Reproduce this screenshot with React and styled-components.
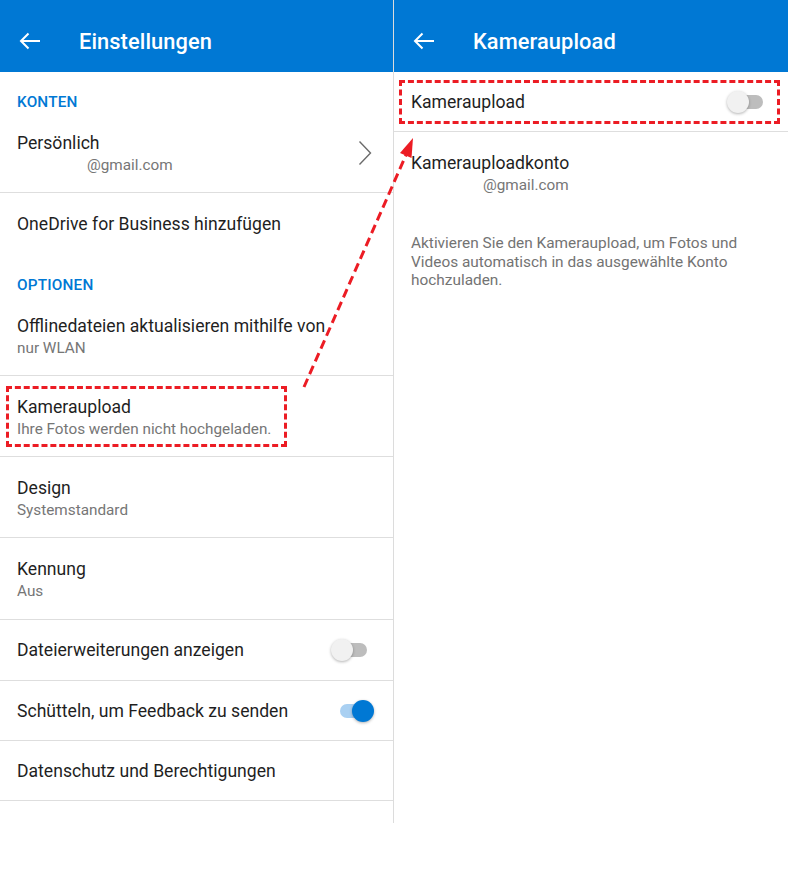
import React from "react";
import styled, { createGlobalStyle } from "styled-components";

const GlobalStyle = createGlobalStyle`
  html, body {
    margin: 0;
    padding: 0;
    background: #ffffff;
  }
  body {
    font-family: Roboto, "Noto Sans", "Liberation Sans", sans-serif;
  }
`;

const Page = styled.div`
  position: relative;
  width: 788px;
  height: 895px;
  background: #ffffff;
`;

const Columns = styled.div`
  display: flex;
  flex-direction: row;
  height: 823px;
`;

const Panel = styled.div`
  display: flex;
  flex-direction: column;
  width: ${(props) => (props.left ? "393px" : "auto")};
  flex: ${(props) => (props.left ? "none" : "1")};
  border-right: ${(props) => (props.left ? "1px solid #dcdcdc" : "none")};
`;

const Header = styled.div`
  display: flex;
  flex-direction: row;
  align-items: center;
  height: 72px;
  padding: 0 19px;
  background: #0078d4;
  color: #ffffff;
  box-sizing: border-box;
`;

const BackBtn = styled.div`
  display: flex;
  align-items: center;
  width: 60px;
  height: 24px;
  padding-top: 10px;
`;

const Title = styled.h1`
  margin: 0;
  padding-top: 11px;
  font-size: 21.8px;
  font-weight: 500;
  letter-spacing: 0.1px;
`;

const SectionLabel = styled.div`
  padding: 20px 17px 0;
  height: 20px;
  line-height: 20px;
  font-size: 15.3px;
  font-weight: 500;
  color: #0078d4;
  letter-spacing: 0.2px;
`;

const Row = styled.div`
  display: flex;
  flex-direction: row;
  justify-content: space-between;
  box-sizing: border-box;
  height: ${(props) => props.h || 81}px;
  padding: ${(props) => (props.twoLine ? "20px 17px 17px" : "0 17px")};
  align-items: ${(props) => (props.twoLine ? "flex-start" : "center")};
  border-bottom: ${(props) => (props.divider ? "1px solid #dedede" : "none")};
`;

const TextCol = styled.div`
  display: flex;
  flex-direction: column;
`;

const RowTitle = styled.div`
  font-size: 17.6px;
  line-height: 22px;
  color: #1f1f1f;
`;

const RowSub = styled.div`
  font-size: 15.3px;
  line-height: 22px;
  color: #767676;
  padding-left: ${(props) => props.indent || 0}px;
`;

const Chevron = styled.div`
  display: flex;
  align-items: center;
  align-self: center;
  margin-right: 4px;
  margin-top: -2px;
`;

const Track = styled.div`
  position: relative;
  width: 30px;
  height: 14px;
  border-radius: 7px;
  margin-right: ${(props) => props.mr || 0}px;
  background: ${(props) => (props.on ? "#a9d0f2" : "#bdbdbd")};
`;

const Thumb = styled.div`
  position: absolute;
  top: -4px;
  left: ${(props) => (props.on ? "12px" : "-6px")};
  width: 22px;
  height: 22px;
  border-radius: 50%;
  background: ${(props) => (props.on ? "#0078d4" : "#f1f1f1")};
  box-shadow: 0 1px 3px rgba(0, 0, 0, 0.3);
`;

const Description = styled.p`
  margin: 0;
  padding: 21px 17px;
  font-size: 15.4px;
  line-height: 18.5px;
  color: #737373;
`;

const Highlight = styled.div`
  position: absolute;
  left: ${(props) => props.x}px;
  top: ${(props) => props.y}px;
  width: ${(props) => props.w}px;
  height: ${(props) => props.h}px;
  border: 3px dashed #ec1c24;
  box-sizing: border-box;
  pointer-events: none;
`;

const Overlay = styled.svg`
  position: absolute;
  left: 0;
  top: 0;
  pointer-events: none;
`;

const BackArrow = () => (
  <svg width="22" height="18" viewBox="0 0 22 18">
    <path
      d="M21 9H2M9.5 1.5L2 9l7.5 7.5"
      fill="none"
      stroke="#fff"
      strokeWidth="2"
    />
  </svg>
);

const Toggle = ({ on, mr }) => (
  <Track on={on ? 1 : 0} mr={mr}>
    <Thumb on={on ? 1 : 0} />
  </Track>
);

const TopBar = ({ title }) => (
  <Header>
    <BackBtn>
      <BackArrow />
    </BackBtn>
    <Title>{title}</Title>
  </Header>
);

const App = () => {
  return (
    <Page>
      <GlobalStyle />
      <Columns>
        <Panel left>
          <TopBar title="Einstellungen" />
          <SectionLabel>KONTEN</SectionLabel>
          <Row twoLine divider>
            <TextCol>
              <RowTitle>Persönlich</RowTitle>
              <RowSub indent={70}>@gmail.com</RowSub>
            </TextCol>
            <Chevron>
              <svg width="14" height="26" viewBox="0 0 14 26">
                <path
                  d="M1.5 1.5L12.5 13L1.5 24.5"
                  fill="none"
                  stroke="#6b6b6b"
                  strokeWidth="1.4"
                />
              </svg>
            </Chevron>
          </Row>
          <Row h={62}>
            <RowTitle>OneDrive for Business hinzufügen</RowTitle>
          </Row>
          <SectionLabel>OPTIONEN</SectionLabel>
          <Row twoLine divider>
            <TextCol>
              <RowTitle>Offlinedateien aktualisieren mithilfe von</RowTitle>
              <RowSub>nur WLAN</RowSub>
            </TextCol>
          </Row>
          <Row twoLine divider>
            <TextCol>
              <RowTitle>Kameraupload</RowTitle>
              <RowSub>Ihre Fotos werden nicht hochgeladen.</RowSub>
            </TextCol>
          </Row>
          <Row twoLine divider>
            <TextCol>
              <RowTitle>Design</RowTitle>
              <RowSub>Systemstandard</RowSub>
            </TextCol>
          </Row>
          <Row twoLine divider h={82}>
            <TextCol>
              <RowTitle>Kennung</RowTitle>
              <RowSub>Aus</RowSub>
            </TextCol>
          </Row>
          <Row h={61} divider>
            <RowTitle>Dateierweiterungen anzeigen</RowTitle>
            <Toggle mr={9} />
          </Row>
          <Row h={60} divider>
            <RowTitle>Schütteln, um Feedback zu senden</RowTitle>
            <Toggle on mr={6} />
          </Row>
          <Row h={60} divider>
            <RowTitle>Datenschutz und Berechtigungen</RowTitle>
          </Row>
        </Panel>
        <Panel>
          <TopBar title="Kameraupload" />
          <Row h={60} divider>
            <RowTitle>Kameraupload</RowTitle>
            <Toggle mr={8} />
          </Row>
          <Row twoLine>
            <TextCol>
              <RowTitle>Kamerauploadkonto</RowTitle>
              <RowSub indent={72}>@gmail.com</RowSub>
            </TextCol>
          </Row>
          <Description>
            Aktivieren Sie den Kameraupload, um Fotos und
            <br />
            Videos automatisch in das ausgewählte Konto
            <br />
            hochzuladen.
          </Description>
        </Panel>
      </Columns>
      <Highlight x={6} y={386} w={281} h={61} />
      <Highlight x={399} y={80} w={381} h={44} />
      <Overlay width="788" height="895" viewBox="0 0 788 895">
        <line
          x1="304"
          y1="387"
          x2="406"
          y2="155"
          stroke="#ec1c24"
          strokeWidth="3"
          strokeDasharray="9 5"
        />
        <polygon points="413,138 411.5,158 400,153" fill="#ec1c24" />
      </Overlay>
    </Page>
  );
};

export default App;
